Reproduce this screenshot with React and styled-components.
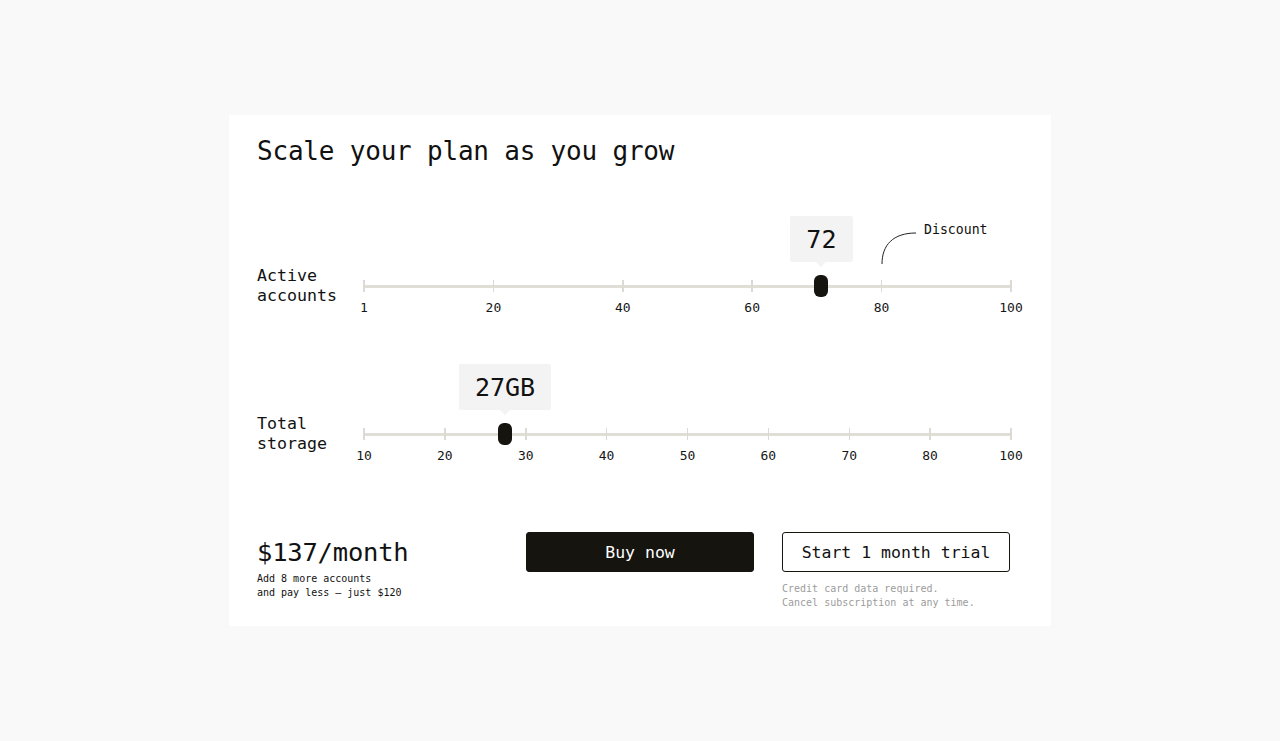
import React from "react";
import styled, { createGlobalStyle } from "styled-components";

const GlobalStyle = createGlobalStyle`
  html, body {
    margin: 0;
    padding: 0;
    background: #f9f9f9;
  }
  body {
    font-family: "DejaVu Sans Mono", "Liberation Mono", monospace;
    color: #111;
  }
`;

const Page = styled.main`
  min-height: 100vh;
  display: flex;
  align-items: center;
  justify-content: center;
`;

const Card = styled.section`
  width: 822px;
  box-sizing: border-box;
  background: #fff;
  padding: 20px 28px 16px;
  display: flex;
  flex-direction: column;
`;

const Title = styled.h1`
  margin: 0;
  font-size: 26px;
  font-weight: 400;
  line-height: 32px;
  letter-spacing: -0.2px;
`;

const SliderRow = styled.div`
  display: flex;
  align-items: center;
  margin-top: ${(p) => p.$top}px;
`;

const RowLabel = styled.div`
  flex: 0 0 107px;
  font-size: 16.6px;
  line-height: 20px;
`;

const TrackArea = styled.div`
  position: relative;
  flex: 0 0 647px;
  height: 24px;
`;

const Line = styled.div`
  position: absolute;
  left: 0;
  right: 0;
  top: 10.5px;
  height: 3px;
  background: #e0ded6;
`;

const Tick = styled.div`
  position: absolute;
  top: 6px;
  width: 1.5px;
  height: 12px;
  margin-left: -0.75px;
  background: #dcdad2;
`;

const TickLabel = styled.span`
  position: absolute;
  top: 26px;
  transform: translateX(-50%);
  font-size: 13px;
  line-height: 16px;
  color: #161616;
`;

const Thumb = styled.div`
  position: absolute;
  top: 1px;
  width: 14px;
  height: 22px;
  margin-left: -7px;
  border-radius: 6px;
  background: #15140f;
`;

const Bubble = styled.div`
  position: absolute;
  bottom: 36px;
  transform: translateX(-50%);
  height: 46px;
  padding: 0 ${(p) => p.$pad}px;
  display: flex;
  align-items: center;
  justify-content: center;
  background: #f3f3f3;
  border-radius: 2px;
  font-size: 25px;
  color: #111;

  &::after {
    content: "";
    position: absolute;
    left: 50%;
    bottom: -5px;
    margin-left: -5px;
    border-left: 5px solid transparent;
    border-right: 5px solid transparent;
    border-top: 5px solid #f3f3f3;
  }
`;

const Annotation = styled.div`
  position: absolute;
  left: 517px;
  bottom: 33px;
  display: flex;
  align-items: flex-start;
`;

const AnnotationText = styled.span`
  font-size: 13.2px;
  line-height: 16px;
  margin-top: -7px;
  margin-left: 7px;
`;

const Bottom = styled.div`
  display: flex;
  align-items: flex-start;
  margin-top: 78px;
`;

const PriceBlock = styled.div`
  flex: 0 0 269px;
  padding-top: 4px;
`;

const Price = styled.div`
  font-size: 25.5px;
  line-height: 32px;
  letter-spacing: -0.2px;
`;

const PriceNote = styled.div`
  margin-top: 4px;
  font-size: 10px;
  line-height: 14px;
`;

const Button = styled.button`
  flex: none;
  width: 228px;
  height: 40px;
  box-sizing: border-box;
  border-radius: 3px;
  font-family: inherit;
  font-size: 16.5px;
  cursor: pointer;
  border: 1.5px solid #15140f;
  background: ${(p) => (p.$primary ? "#15140f" : "#fff")};
  color: ${(p) => (p.$primary ? "#fff" : "#111")};
`;

const TrialColumn = styled.div`
  margin-left: 28px;
  display: flex;
  flex-direction: column;
  width: 228px;
`;

const FinePrint = styled.div`
  margin-top: 10px;
  font-size: 10px;
  line-height: 14px;
  color: #9c9c9c;
`;

function Slider({ ticks, value, position, bubblePad, annotation }) {
  const step = 1 / (ticks.length - 1);
  return (
    <TrackArea>
      <Line />
      {ticks.map((t, i) => (
        <React.Fragment key={t}>
          <Tick style={{ left: `${i * step * 100}%` }} />
          <TickLabel style={{ left: `${i * step * 100}%` }}>{t}</TickLabel>
        </React.Fragment>
      ))}
      {annotation && (
        <Annotation>
          <svg width="36" height="36" viewBox="0 0 36 36">
            <path
              d="M1 35 C1 16 12 4 35 4"
              fill="none"
              stroke="#222"
              strokeWidth="1"
            />
          </svg>
          <AnnotationText>{annotation}</AnnotationText>
        </Annotation>
      )}
      <Bubble $pad={bubblePad} style={{ left: `${position * 100}%` }}>
        {value}
      </Bubble>
      <Thumb style={{ left: `${position * 100}%` }} />
    </TrackArea>
  );
}

export default function App() {
  return (
    <>
      <GlobalStyle />
      <Page>
        <Card>
          <Title>Scale your plan as you grow</Title>

          <SliderRow $top={99}>
            <RowLabel>
              Active
              <br />
              accounts
            </RowLabel>
            <Slider
              ticks={["1", "20", "40", "60", "80", "100"]}
              value="72"
              position={0.707}
              bubblePad={16}
              annotation="Discount"
            />
          </SliderRow>

          <SliderRow $top={108}>
            <RowLabel>
              Total
              <br />
              storage
            </RowLabel>
            <Slider
              ticks={["10", "20", "30", "40", "50", "60", "70", "80", "100"]}
              value="27GB"
              position={0.218}
              bubblePad={16}
            />
          </SliderRow>

          <Bottom>
            <PriceBlock>
              <Price>$137/month</Price>
              <PriceNote>
                Add 8 more accounts
                <br />
                and pay less — just $120
              </PriceNote>
            </PriceBlock>
            <Button $primary>Buy now</Button>
            <TrialColumn>
              <Button>Start 1 month trial</Button>
              <FinePrint>
                Credit card data required.
                <br />
                Cancel subscription at any time.
              </FinePrint>
            </TrialColumn>
          </Bottom>
        </Card>
      </Page>
    </>
  );
}
